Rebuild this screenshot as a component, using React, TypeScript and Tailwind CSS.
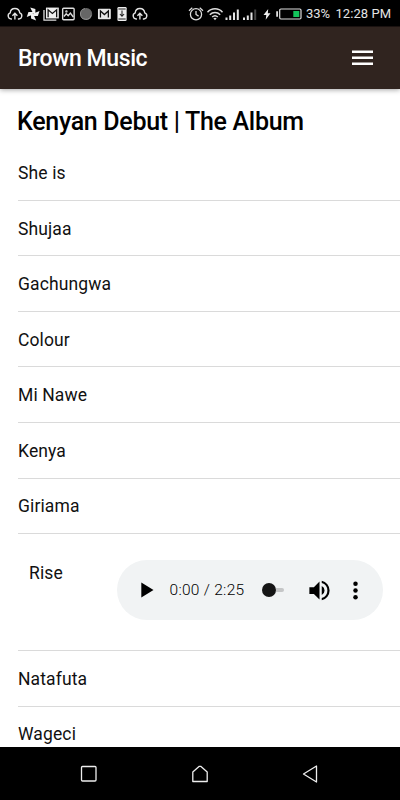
import React from "react";

const before = ["She is", "Shujaa", "Gachungwa", "Colour", "Mi Nawe", "Kenya", "Giriama"];
const after = ["Natafuta", "Wageci"];

function CloudUpload() {
  return (
    <svg className="h-[18px] w-[17.8px] shrink-0" viewBox="0 0 18 18" fill="none" stroke="#e4e4e4" strokeWidth="1.4">
      <path d="M6 14H5.2a3.2 3.2 0 0 1-.9-6.2C4.5 5 6.500 3.500 9 3.500s4.500 1.500 4.900 4.300a3.200 3.200 0 0 1-.9 6.200H12M9 14.500V8.500M6.500 10.800 9 8.300l2.500 2.500" />
    </svg>
  );
}

function StatusBar() {
  return (
    <div className="flex h-[26px] shrink-0 items-center bg-black pl-[6px] pt-px text-[#e4e4e4]">
      <CloudUpload />
      <svg className="h-[18px] w-[17.8px] shrink-0" viewBox="0 0 18 18" fill="#f0f0f0">
        <path d="M9.300 8.500 6.300 2.300 11.500 4v4.500zM9.500 8.500l6.200-2.500-1.700 5H9.500zM9.300 9l3 6.500-5.200-2V9zM9 9.500l-6.200 2.500 1.700-5H9z" />
      </svg>
      <svg className="h-[18px] w-[17.8px] shrink-0" viewBox="0 0 18 18" fill="none">
        <path d="M2 5v10.300h12.500" stroke="#ddd" strokeWidth="1.300" />
        <path d="M4 2.500h13v11H4z" fill="#eee" />
        <path d="M6.200 12.200V4.800l4.300 3.700 4.300-3.700v7.400" stroke="#111" strokeWidth="1.300" />
      </svg>
      <svg className="h-[18px] w-[17.8px] shrink-0" viewBox="0 0 18 18" fill="none" stroke="#ddd" strokeWidth="1.400">
        <rect x="3.700" y="3.200" width="11.600" height="11.600" rx="1" />
        <path d="m5 11.500 2.300-2.700 2 1.900L11.500 8l3 4" />
        <circle cx="7.500" cy="6.400" r=".5" />
      </svg>
      <svg className="h-[18px] w-[17.8px] shrink-0" viewBox="0 0 18 18">
        <circle cx="9.400" cy="9" r="6" fill="#666" />
        <path d="M8 3.500a5.500 5.500 0 1 0 6.300 6.800" fill="none" stroke="#a5a5a5" strokeWidth=".8" />
      </svg>
      <svg className="h-[18px] w-[17.8px] shrink-0" viewBox="0 0 18 18" fill="none">
        <rect x="3" y="3.700" width="13" height="10.600" rx="1" fill="#e8e8e8" />
        <path d="M5.500 12.500V6l4 3.600 4-3.600v6.500" stroke="#111" strokeWidth="1.300" />
      </svg>
      <svg className="h-[18px] w-[17.8px] shrink-0" viewBox="0 0 18 18" fill="none">
        <rect x="4.500" y="2" width="9.300" height="14" rx="1.300" fill="#eee" />
        <path d="M5.500 4h7.300M5.500 14h7.300M9.100 5.500V11M7 9l2.100 2.300L11.200 9" stroke="#222" strokeWidth="1.100" />
      </svg>
      <CloudUpload />
      <svg className="ml-[38.500px] h-[18px] w-[18px] shrink-0" viewBox="0 0 18 18" fill="none" stroke="#ddd" strokeWidth="1.300">
        <circle cx="9" cy="9.300" r="5.600" />
        <path d="M9 6v3.500l2.600 1.600M2 5.700l3.300-2.900M16 5.700l-3.300-2.900" />
      </svg>
      <svg className="ml-[1.500px] h-[18px] w-[18px] shrink-0" viewBox="0 0 18 18" fill="none" stroke="#ddd" strokeWidth="1.500">
        <path d="M1.500 7.200c4-4.500 11-4.500 15 0M3.800 9.700c3-3 7.400-3 10.400 0M6.200 12c1.700-1.600 3.900-1.600 5.600 0" />
        <path d="M7.300 13.300 9 15.200l1.700-1.900c-1-.8-2.400-.8-3.400 0z" fill="#ddd" stroke="none" />
      </svg>
      <svg className="ml-[1px] h-[18px] w-[33px] shrink-0" viewBox="0 0 33 18" fill="#e4e4e4">
        <path d="M.5 12.500h2V15h-2zM4.200 10.500h2V15h-2zM8 7.500h2V15H8zM11.800 4.500h2V15h-2zM18 12.500h2V15h-2zM21.800 10.500h2V15h-2zM25.500 7.500h2V15h-2z" />
        <path d="M29.200 4.500h2V15h-2z" fill="#444" />
      </svg>
      <svg className="ml-[5px] h-[18px] w-[8px] shrink-0" viewBox="0 0 8 18" fill="#eee">
        <path d="M5.200 4 .5 10h2.800L2.700 14.700 7.500 8.300H4.800z" />
      </svg>
      <svg className="ml-[4.500px] h-[18px] w-[26px] shrink-0" viewBox="0 0 26 18">
        <path d="M.2 6.200h1.800v5.600H.2z" fill="#ddd" />
        <rect x="3.700" y="4" width="21.300" height="10" rx="1.200" fill="none" stroke="#ddd" strokeWidth="1.200" />
        <path d="M17.300 6h6v6h-6z" fill="#13c45b" />
      </svg>
      <span className="ml-[4px] w-[29.500px] shrink-0 whitespace-nowrap text-[13px] leading-[18px] tracking-[0.050px]">33%</span>
      <span className="whitespace-nowrap text-[13px] leading-[18px] tracking-[0.100px]">12:28 PM</span>
    </div>
  );
}

function Row({ name }: { name: string }) {
  return (
    <li className="ml-[18px] flex h-[55.600px] shrink-0 items-center border-b border-[#dadada] pt-[1.500px] text-[17.500px] tracking-[0.120px] text-[#111]">
      {name}
    </li>
  );
}

function Player() {
  return (
    <div className="ml-[54px] flex h-[60px] w-[266px] items-center rounded-full bg-[#f1f3f4]">
      <svg className="ml-[24px] h-[16px] w-[13px]" viewBox="0 0 13 16">
        <path d="M.300.500v15L12.500 8z" />
      </svg>
      <span className="ml-[15.500px] w-[92px] whitespace-nowrap pt-px text-[15.500px] font-light tracking-[0.280px] text-black">0:00 / 2:25</span>
      <div className="flex h-[14px] w-[22px] items-center rounded-full">
        <div className="h-[14px] w-[14px] shrink-0 rounded-full bg-[#151515]" />
        <div className="h-[4px] w-[8px] rounded-r-full bg-[#c5c6c7]" />
      </div>
      <svg className="ml-[22.500px] h-[27px] w-[27px]" viewBox="0 0 24 24">
        <path d="M3 9v6h4l5 5V4L7 9H3zm13.500 3A4.500 4.500 0 0 0 14 7.970v8.050A4.500 4.500 0 0 0 16.500 12zM14 3.230v2.060a7 7 0 0 1 0 13.420v2.060a9 9 0 0 0 0-17.540z" />
      </svg>
      <svg className="ml-[8.500px] h-[27px] w-[27px]" viewBox="0 0 24 24">
        <circle cx="12" cy="6" r="2" />
        <circle cx="12" cy="12" r="2" />
        <circle cx="12" cy="18" r="2" />
      </svg>
    </div>
  );
}

export default function App() {
  return (
    <div className="flex h-[800px] w-[400px] flex-col overflow-hidden bg-white font-['Roboto',sans-serif]">
      <StatusBar />
      <header className="z-10 flex h-[63px] shrink-0 items-center justify-between border-t border-[#1a1210] bg-[#30241f] pl-[18px] pr-[27px] shadow-[0_1px_5px_rgba(0,0,0,0.350)]">
        <span className="pt-[2px] text-[23px] font-medium tracking-[-0.400px] text-white">Brown Music</span>
        <svg className="h-[16px] w-[21px]" viewBox="0 0 21 16" fill="white">
          <path d="M0 .500h21v2.500H0zM0 6.500h21V9H0zM0 12.500h21V15H0z" />
        </svg>
      </header>
      <main className="flex min-h-0 flex-1 flex-col overflow-hidden">
        <h1 className="flex h-[56px] shrink-0 items-center pl-[17px] pt-[10px] text-[25px] font-medium tracking-[-0.300px] text-black">
          Kenyan Debut | The Album
        </h1>
        <ul className="flex flex-col">
          {before.map((name) => (
            <Row key={name} name={name} />
          ))}
          <li className="ml-[18px] flex h-[116.800px] shrink-0 items-start border-b border-[#dadada] pl-[11px] pt-[26px] text-[17.500px] tracking-[0.120px] text-[#111]">
            <span className="w-[34px] leading-[26px]">Rise</span>
            <Player />
          </li>
          {after.map((name) => (
            <Row key={name} name={name} />
          ))}
        </ul>
      </main>
      <nav className="flex h-[53px] shrink-0 items-center justify-center gap-[91px] bg-black">
        <svg className="h-[20px] w-[20px]" viewBox="0 0 20 20" fill="none" stroke="#eee" strokeWidth="1.300">
          <rect x="2.500" y="2.500" width="14.500" height="14.500" rx="1" />
        </svg>
        <svg className="h-[20px] w-[20px]" viewBox="0 0 20 20" fill="none" stroke="#eee" strokeWidth="1.300" strokeLinejoin="round">
          <path d="M2.800 8 9.300 2.300h1.400L17.200 8V17.500H2.800z" />
        </svg>
        <svg className="h-[20px] w-[20px]" viewBox="0 0 20 20" fill="none" stroke="#eee" strokeWidth="1.300" strokeLinejoin="round">
          <path d="M15.500 2v16L2.500 10z" />
        </svg>
      </nav>
    </div>
  );
}
